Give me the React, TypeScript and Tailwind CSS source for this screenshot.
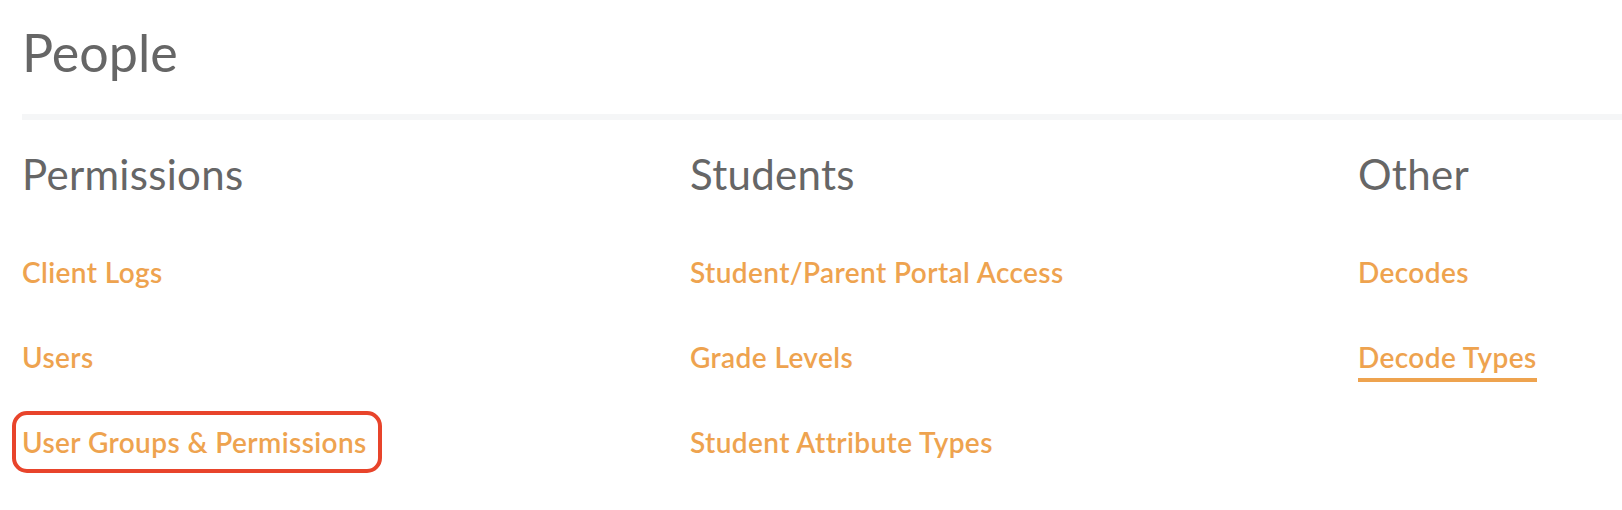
import React from "react";

const font = { fontFamily: "Lato, 'Open Sans', sans-serif" };

function Link({ children, underline, boxed }: { children: React.ReactNode; underline?: boolean; boxed?: boolean }) {
  return (
    <div className="h-[85px] flex items-start">
      <span
        className={`relative inline-block text-[28px] leading-[34px] font-semibold tracking-[0.4px] text-[#eea34f] ${
          underline ? "pb-[4px] border-b-4 border-[#eea34f]" : ""
        }`}
        style={font}
      >
        {children}
        {boxed && (
          <span className="absolute left-[-10px] right-[-15px] top-[-14px] bottom-[-14px] rounded-[15px] border-4 border-[#e8442b]" />
        )}
      </span>
    </div>
  );
}

function Column({ title, links, underlineIdx }: { title: string; links: string[]; underlineIdx?: number }) {
  return (
    <div className="flex flex-col">
      <h2 className="text-[42px] leading-[50px] tracking-[0.3px] text-[#666666] mt-[29px] mb-[56px]" style={font}>
        {title}
      </h2>
      {links.map((l, i) => (
        <Link key={l} underline={i === underlineIdx} boxed={title === "Permissions" && i === 2}>
          {l}
        </Link>
      ))}
    </div>
  );
}

export default function App() {
  return (
    <div className="w-[1622px] h-[510px] overflow-hidden bg-white pl-[22px]">
      <h1 className="pt-[22px] text-[52px] leading-[60px] text-[#666666]" style={font}>
        People
      </h1>
      <div className="mt-[32px] h-[6px] bg-[#f5f6f7]" />
      <div className="grid grid-cols-[668px_668px_668px]">
        <Column title="Permissions" links={["Client Logs", "Users", "User Groups & Permissions"]} />
        <Column title="Students" links={["Student/Parent Portal Access", "Grade Levels", "Student Attribute Types"]} />
        <Column title="Other" links={["Decodes", "Decode Types"]} underlineIdx={1} />
      </div>
    </div>
  );
}
